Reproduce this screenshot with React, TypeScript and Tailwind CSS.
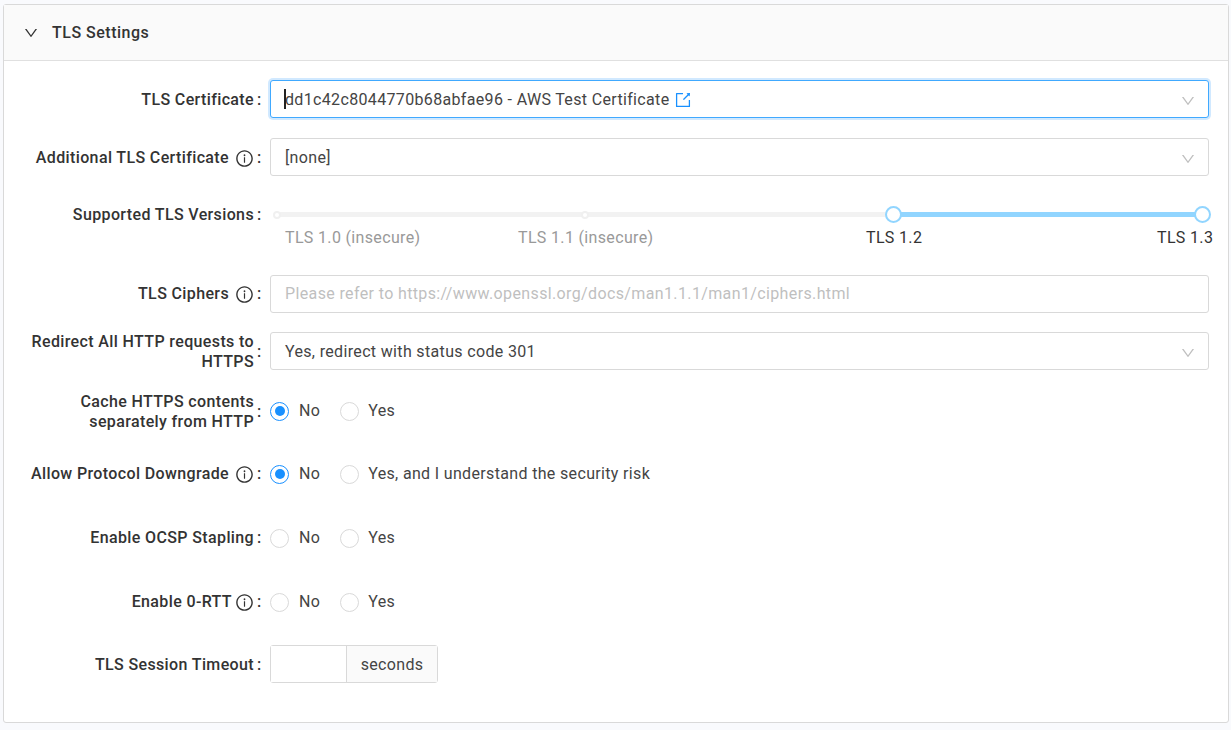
import type { ReactNode } from "react"
import { AiOutlineDown, AiOutlineExport, AiOutlineInfoCircle } from "react-icons/ai"

// 表单一行：右对齐的标签 + 冒号 + 控件
function Row({
  label,
  info,
  tightInfo,
  labelClassName,
  className,
  children,
}: {
  label: ReactNode
  info?: boolean
  tightInfo?: boolean
  labelClassName?: string
  className?: string
  children: ReactNode
}) {
  return (
    <div className={`flex items-center ${className ?? ""}`}>
      <div
        className={`flex w-[266px] shrink-0 items-center justify-end font-medium leading-5 tracking-[0.37px] text-[#333] ${labelClassName ?? ""}`}
      >
        <span className="text-right">{label}</span>
        {info && (
          <AiOutlineInfoCircle size={19} className={`shrink-0 text-[#333] ${tightInfo ? "ml-[3px]" : "ml-[6px]"}`} />
        )}
        <span className="ml-[-1px] w-[17px] shrink-0 pl-[4px]">:</span>
      </div>
      <div className="min-w-0 flex-1">{children}</div>
    </div>
  )
}

function SelectBox({
  focused,
  contentClassName,
  children,
}: {
  focused?: boolean
  contentClassName?: string
  children: ReactNode
}) {
  return (
    <div
      className={`relative flex h-[38px] items-center justify-between rounded-[3px] border bg-white pl-[14px] pr-[12px] text-[#444] ${
        focused ? "border-[#40a9ff] shadow-[0_0_0_2px_rgba(24,144,255,0.2)]" : "border-[#d9d9d9]"
      }`}
    >
      <div className={`flex items-center ${contentClassName ?? ""}`}>{children}</div>
      <AiOutlineDown size={16} className="mt-[3px] text-[#bfbfbf]" />
    </div>
  )
}

function Radio({ checked, label, labelClassName }: { checked?: boolean; label: string; labelClassName: string }) {
  return (
    <div className="flex items-center">
      <span
        className={`flex size-[19px] items-center justify-center rounded-full border bg-white ${
          checked ? "border-[#1890ff]" : "border-[#d9d9d9]"
        }`}
      >
        {checked && <span className="size-[10px] rounded-full bg-[#1890ff]" />}
      </span>
      <span className={`text-[#444] ${labelClassName}`}>{label}</span>
    </div>
  )
}

function YesNo({ checked, yes = "Yes" }: { checked?: boolean; yes?: string }) {
  return (
    <div className="flex items-center gap-[20px]">
      <Radio checked={checked} label="No" labelClassName="ml-[10px]" />
      <Radio label={yes} labelClassName="ml-[9px]" />
    </div>
  )
}

// 滑块的刻度位置本身就是内容，这里用绝对定位
function VersionSlider() {
  return (
    <div className="relative h-[61px]">
      <div className="absolute left-[7px] top-[16px] h-[5px] w-[925px] bg-[#f2f2f2]" />
      <div className="absolute left-[623px] top-[16px] h-[5px] w-[309px] bg-[#91d5ff]" />
      <span className="absolute left-[3px] top-[15px] size-[8px] rounded-full border-2 border-[#f0f0f0] bg-white" />
      <span className="absolute left-[311px] top-[15px] size-[8px] rounded-full border-2 border-[#f0f0f0] bg-white" />
      <span className="absolute left-[615px] top-[10px] size-[17px] rounded-full border-2 border-[#91d5ff] bg-white" />
      <span className="absolute left-[924px] top-[10px] size-[17px] rounded-full border-2 border-[#91d5ff] bg-white" />
      <span className="absolute left-[15px] top-[30px] whitespace-nowrap text-[#999]">TLS 1.0 (insecure)</span>
      <span className="absolute left-[248px] top-[30px] whitespace-nowrap text-[#999]">TLS 1.1 (insecure)</span>
      <span className="absolute left-[596px] top-[30px] whitespace-nowrap text-[#333]">TLS 1.2</span>
      <span className="absolute left-[887px] top-[30px] whitespace-nowrap text-[#333]">TLS 1.3</span>
    </div>
  )
}

export default function App() {
  return (
    <div className="h-[730px] overflow-hidden bg-[#f9fafd] pl-[3px] pr-[2px] pt-[4px] font-['Roboto',sans-serif] text-[16px] leading-6 tracking-[0.34px]">
      <div className="h-[719px] rounded-[3px] border border-[#d9d9d9] bg-white">
        {/* 标题栏 */}
        <div className="flex h-[56px] items-center border-b border-[#e0e0e0] bg-[#fafafa] pl-[19px]">
          <AiOutlineDown size={16} className="text-[#333]" />
          <span className="ml-[13px] font-medium tracking-[0.5px] text-[#333]">TLS Settings</span>
        </div>

        {/* 表单 */}
        <div className="pr-[19px] pt-[19px]">
          <Row label="TLS Certificate" labelClassName="pt-[2px]">
            <SelectBox focused contentClassName="pt-[2px]">
              <span className="absolute left-[13px] top-[8px] h-[20px] w-[2px] bg-[#222]" />
              <span>dd1c42c8044770b68abfae96 - AWS Test Certificate</span>
              <AiOutlineExport size={18} className="ml-[4px] text-[#1890ff]" />
            </SelectBox>
          </Row>
          <Row label="Additional TLS Certificate" info labelClassName="pt-[2px]" className="mt-[20px]">
            <SelectBox contentClassName="pt-[2px]">[none]</SelectBox>
          </Row>
          <Row label="Supported TLS Versions" labelClassName="mt-[9px]" className="mt-[20px] !items-start">
            <VersionSlider />
          </Row>
          <Row label="TLS Ciphers" info className="mt-[18px]">
            <div className="flex h-[38px] items-center rounded-[3px] border border-[#d9d9d9] bg-white pl-[14px] tracking-[0.37px] text-[#bfbfbf]">
              Please refer to https://www.openssl.org/docs/man1.1.1/man1/ciphers.html
            </div>
          </Row>
          <Row
            label={
              <>
                Redirect All HTTP requests to
                <br />
                HTTPS
              </>
            }
            labelClassName="pt-[2px]"
            className="mt-[17px]"
          >
            <SelectBox contentClassName="pt-[2px]">Yes, redirect with status code 301</SelectBox>
          </Row>
          <Row
            label={
              <>
                Cache HTTPS contents
                <br />
                separately from HTTP
              </>
            }
            labelClassName="pt-[2px]"
            className="mt-[18px]"
          >
            <YesNo checked />
          </Row>
          <Row label="Allow Protocol Downgrade" info className="mt-[30px]">
            <YesNo checked yes="Yes, and I understand the security risk" />
          </Row>
          <Row label="Enable OCSP Stapling" className="mt-[40px]">
            <YesNo />
          </Row>
          <Row label="Enable 0-RTT" info tightInfo className="mt-[40px]">
            <YesNo />
          </Row>
          <Row label="TLS Session Timeout" labelClassName="pt-[2px]" className="mt-[31px]">
            <div className="flex h-[38px] w-[168px] rounded-[3px] border border-[#d9d9d9]">
              <div className="w-[76px] border-r border-[#d9d9d9] bg-white" />
              <div className="flex flex-1 items-center justify-center bg-[#fafafa] pt-[2px] text-[#444]">seconds</div>
            </div>
          </Row>
        </div>
      </div>
    </div>
  )
}
